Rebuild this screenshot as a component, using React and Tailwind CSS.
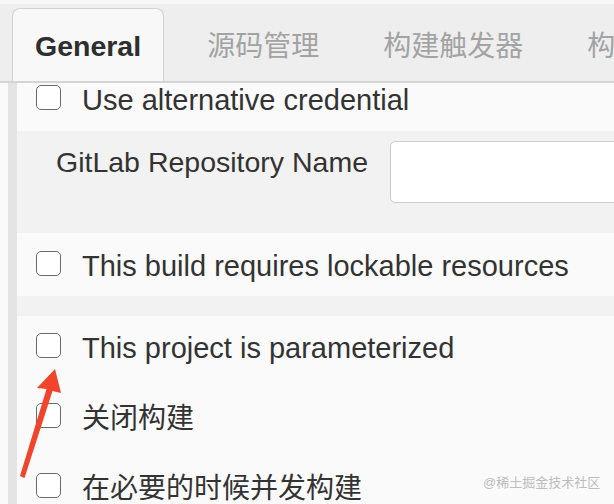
import React from "react";

const FONT = { fontFamily: '"Liberation Sans", "Noto Sans CJK SC", sans-serif' };

function Box() {
  return (
    <div className="w-[25px] h-[25px] flex-none rounded-[5px] border-[1.5px] border-[#6a6a6a] bg-white mt-[1px]" />
  );
}

function Row({ label, cjk, className = "" }) {
  return (
    <div className={`flex items-start pl-[19px] ${className}`}>
      <Box />
      <span
        className={`ml-[21px] leading-[33px] text-[#333333] whitespace-nowrap ${cjk ? "text-[28px]" : "text-[29px]"}`}
      >
        {label}
      </span>
    </div>
  );
}

export default function App() {
  return (
    <div
      className="relative w-[614px] h-[504px] overflow-hidden bg-[#fafafa] flex flex-col"
      style={FONT}
    >
      {/* Tab bar */}
      <div className="bg-[#f7f7f7] pt-[4px] flex-none">
        <div className="bg-[#eeeeee] pt-[4px] pl-[12px] flex items-start border-b-2 border-[#d5d5d5]">
          <div className="h-[73px] px-[22px] pt-[21px] rounded-t-[8px] border border-b-0 border-[#d2d2d2] bg-[#f8f8f8]">
            <span className="block text-[28.5px] leading-[33px] font-bold text-[#2e2e2e]">General</span>
          </div>
          <div className="flex ml-[43px] gap-[64px] pt-[22px] text-[28px] leading-[33px] text-[#a3a3a3] whitespace-nowrap">
            <span>源码管理</span>
            <span>构建触发器</span>
            <span>构</span>
          </div>
        </div>
      </div>

      {/* Content */}
      <div className="flex flex-1">
        <div className="w-[9px] ml-[8px] bg-[#e4e4e4] flex-none" />
        <div className="flex-1 flex flex-col">
          <Row label="Use alternative credential" className="h-[48px] pt-[0.5px]" />

          <div className="bg-[#f2f2f2] h-[102px] pt-[10px] pl-[39px] flex items-start">
            <span className="mt-[4.5px] text-[28.5px] leading-[33px] text-[#333333] whitespace-nowrap">
              GitLab Repository Name
            </span>
            <div className="ml-[22px] w-[260px] h-[62px] flex-none rounded-[5px] border-[1.5px] border-[#cbcbcb] bg-white" />
          </div>

          <Row label="This build requires lockable resources" className="h-[63px] pt-[16.5px]" />

          <div className="h-[20px] bg-[#f2f2f2]" />

          <Row label="This project is parameterized" className="h-[70px] pt-[15.5px]" />
          <Row label="关闭构建" cjk className="h-[70px] pt-[15.5px]" />
          <Row label="在必要的时候并发构建" cjk className="h-[70px] pt-[15.5px]" />
        </div>
      </div>

      {/* Annotation arrow */}
      <svg className="absolute left-0 top-0 pointer-events-none" width="614" height="504" viewBox="0 0 614 504">
        <polygon
          points="20,476 24.5,478 52.5,391 61,393 55,369 37,388 46.5,389"
          fill="#f1442b"
        />
      </svg>

      {/* Watermark */}
      <div className="absolute left-[483px] top-[474px] text-[13px] leading-[17px] text-[#bdbdbd] whitespace-nowrap">
        @稀土掘金技术社区
      </div>
    </div>
  );
}
